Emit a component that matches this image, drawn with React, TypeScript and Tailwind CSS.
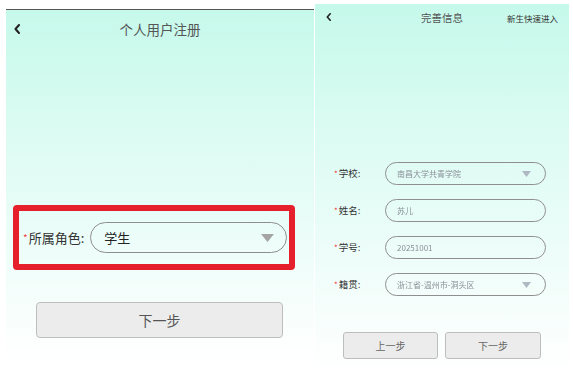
import React from "react";

const font = { fontFamily: '"Noto Sans CJK SC", "Noto Sans", sans-serif' };

function Chevron({ w, h, sw }: { w: number; h: number; sw: number }) {
  return (
    <svg width={w} height={h} viewBox={`0 0 ${w} ${h}`} fill="none">
      <polyline
        points={`${w - sw / 2},${sw / 2} ${sw / 2 + 0.5},${h / 2} ${w - sw / 2},${h - sw / 2}`}
        stroke="#222"
        strokeWidth={sw}
        strokeLinecap="round"
        strokeLinejoin="round"
      />
    </svg>
  );
}

function Tri({ w, h, color }: { w: number; h: number; color: string }) {
  return (
    <svg width={w} height={h} viewBox={`0 0 ${w} ${h}`}>
      <polygon points={`0,0 ${w},0 ${w / 2},${h}`} fill={color} />
    </svg>
  );
}

function Row({ label, value, select }: { label: string; value: string; select?: boolean }) {
  return (
    <div className="flex items-center h-[23px]">
      <div className="w-[50px] flex items-center whitespace-nowrap text-[9.5px] text-[#333]">
        <span className="text-[#e33] text-[8px] mr-[1px]">*</span>
        {label}
      </div>
      <div className="ml-[1px] w-[161px] h-[23px] rounded-full border border-[#8f8f8f] flex items-center pl-[11px] pr-[14px]">
        <span className="flex-1 text-[8px] text-[#8a8f98] blur-[0.5px] whitespace-nowrap">{value}</span>
        {select && (
          <span className="blur-[0.4px]">
            <Tri w={9} h={6} color="#b0b8c4" />
          </span>
        )}
      </div>
    </div>
  );
}

export default function App() {
  return (
    <div className="w-[573px] h-[387px] bg-white flex items-start pl-[6px]" style={font}>
      {/* Left panel */}
      <div className="mt-[9px] w-[308px] h-[352px] bg-gradient-to-b from-[#c6f9eb] via-[#e4fcf6] to-white flex flex-col">
        <div className="h-[1px] bg-[#555]" />
        <div className="relative h-[39px] flex items-center justify-center">
          <div className="absolute left-[8px] top-[14px]">
            <Chevron w={6} h={10} sw={2} />
          </div>
          <span className="text-[13.5px] text-[#555]">个人用户注册</span>
        </div>
        <div className="mt-[156px] ml-[7px] w-[282px] h-[65px] border-[6px] border-[#e51f2b] rounded-[4px] flex items-center pl-[4px] pr-[2px]">
          <span className="text-[#e44] text-[10px] mr-[1px]">*</span>
          <span className="text-[13px] text-[#333] whitespace-nowrap">所属角色:</span>
          <div className="ml-[6px] flex-1 h-[31px] rounded-full border border-[#8e8e8e] flex items-center pl-[13px] pr-[12px]">
            <span className="flex-1 text-[13px] text-[#222]">学生</span>
            <Tri w={13} h={8} color="#a4a4a4" />
          </div>
        </div>
        <div className="mt-[32px] ml-[30px] w-[247px] h-[36px] rounded-[4px] border border-[#bdbdbd] bg-[#ececec] flex items-center justify-center text-[14px] text-[#555]">
          下一步
        </div>
      </div>

      {/* Right panel */}
      <div className="ml-[1px] mt-[4px] w-[254px] h-[370px] bg-gradient-to-b from-[#c6f9eb] via-[#e4fcf6] to-white flex flex-col">
        <div className="relative h-[27px] flex items-center justify-center">
          <div className="absolute left-[11px] top-[9px]">
            <Chevron w={5} h={8} sw={1.6} />
          </div>
          <span className="text-[10.5px] text-[#555]">完善信息</span>
          <span className="absolute right-[11px] top-[8px] text-[8.5px] text-[#333]">新生快速进入</span>
        </div>
        <div className="mt-[131px] ml-[19px] flex flex-col gap-[14px]">
          <Row label="学校:" value="南昌大学共青学院" select />
          <Row label="姓名:" value="苏儿" />
          <Row label="学号:" value="20251001" />
          <Row label="籍贯:" value="浙江省-温州市-洞头区" select />
        </div>
        <div className="mt-[36px] ml-[28px] flex gap-[7px]">
          <div className="w-[95px] h-[27px] rounded-[3px] border border-[#bdbdbd] bg-[#ececec] flex items-center justify-center text-[10px] text-[#666]">
            上一步
          </div>
          <div className="w-[96px] h-[27px] rounded-[3px] border border-[#bdbdbd] bg-[#ececec] flex items-center justify-center text-[10px] text-[#666]">
            下一步
          </div>
        </div>
      </div>
    </div>
  );
}
